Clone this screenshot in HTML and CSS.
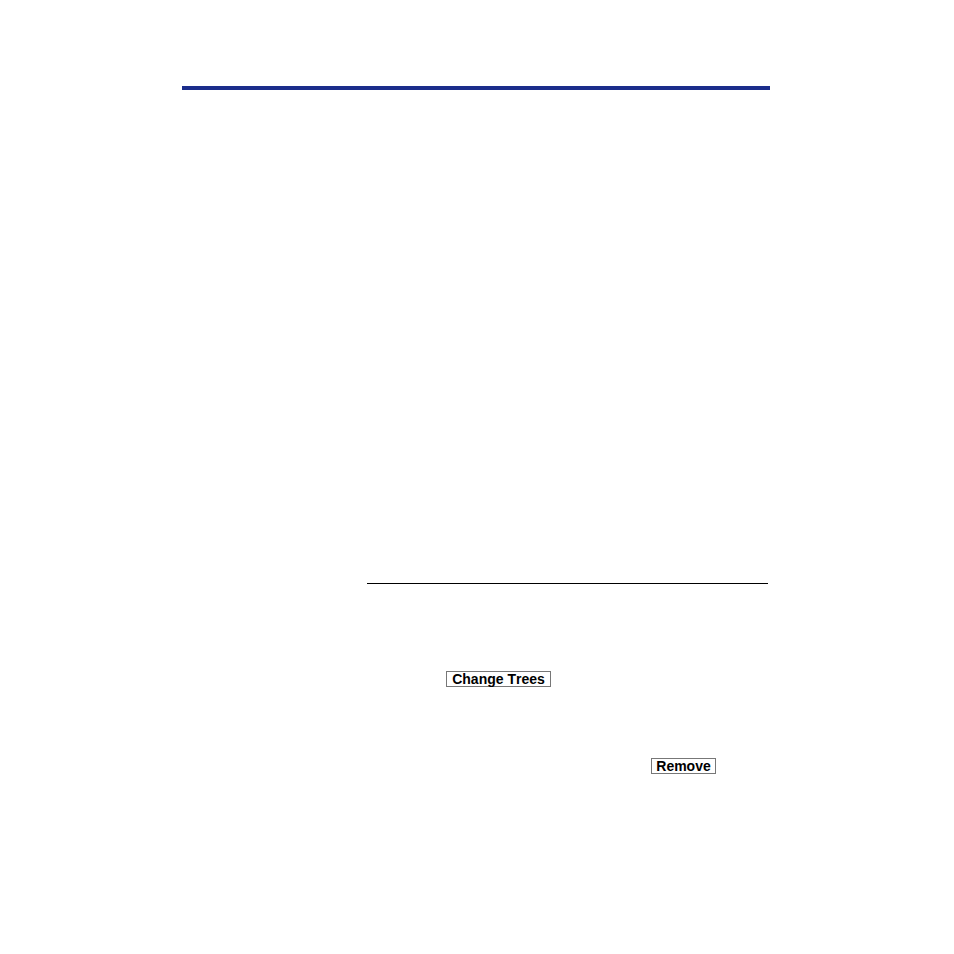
FILE: index.html
```
<!DOCTYPE html>
<html lang="en">
<head>
<meta charset="utf-8">
<meta name="viewport" content="width=device-width, initial-scale=1">
<title>Change Trees</title>
<link rel="stylesheet" href="styles.css">
</head>
<body>
<main class="page">
  <header class="banner"></header>
  <section class="content">
    <div class="row row-change"><button type="button" class="key">Change Trees</button></div>
    <div class="row row-remove"><button type="button" class="key">Remove</button></div>
  </section>
</main>
</body>
</html>
```
FILE: styles.css
```
* {
  box-sizing: border-box;
}

body {
  margin: 0;
  background: #fff;
  color: #000;
  font-family: "Liberation Sans", Arial, sans-serif;
}

/* Outer margins and text block scale with the window. */
.page {
  display: grid;
  grid-template-columns: 182fr 185fr 401fr 2fr 184fr;
  padding: 86px 0;
}

.banner {
  grid-column: 2 / 5;
  height: 4px;
  background: #1b2d8b;
}

.content {
  grid-column: 3;
  margin-top: 493px;
  padding-top: 87px;
  border-top: 1px solid #000;
  display: flex;
  flex-direction: column;
  gap: 71px;
}

.row {
  display: grid;
}

.row-change {
  grid-template-columns: 79fr 105fr 217fr;
}

.row-remove {
  grid-template-columns: 284fr 65fr 52fr;
}

.key {
  grid-column: 2;
  display: block;
  height: 16px;
  margin: 0;
  padding: 0 4px;
  border: 1px solid #777;
  border-radius: 0;
  background: #fff;
  color: #000;
  font: bold 14px/14px "Liberation Sans", Arial, sans-serif;
  font-kerning: none;
  text-align: center;
  white-space: nowrap;
}
```
